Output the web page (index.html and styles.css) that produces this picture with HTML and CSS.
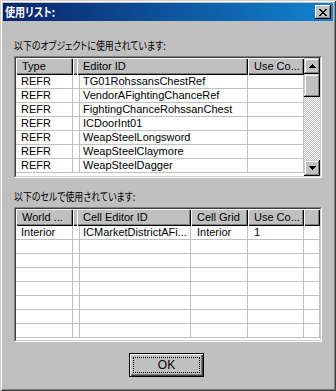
FILE: index.html
```html
<!DOCTYPE html>
<html lang="ja">
<head>
<meta charset="utf-8">
<title>使用リスト</title>
<link rel="stylesheet" href="styles.css">
</head>
<body>
<div class="window">
  <div class="titlebar">
    <span class="title">使用リスト:</span>
    <div class="close">
      <svg width="8" height="7" viewBox="0 0 8 7" shape-rendering="crispEdges">
        <rect x="0" y="0" width="2" height="1"/><rect x="6" y="0" width="2" height="1"/>
        <rect x="1" y="1" width="2" height="1"/><rect x="5" y="1" width="2" height="1"/>
        <rect x="2" y="2" width="4" height="1"/>
        <rect x="3" y="3" width="2" height="1"/>
        <rect x="2" y="4" width="4" height="1"/>
        <rect x="1" y="5" width="2" height="1"/><rect x="5" y="5" width="2" height="1"/>
        <rect x="0" y="6" width="2" height="1"/><rect x="6" y="6" width="2" height="1"/>
      </svg>
    </div>
  </div>
  <div class="client">
    <div class="label"><span class="ltext">以下のオブジェクトに使用されています:</span></div>
    <div class="listbox lb1">
      <div class="lb-inner">
        <div class="grid g1">
          <div class="hdr">
            <div class="hcell">Type</div><div class="hcell"></div><div class="hcell">Editor ID</div><div class="hcell">Use Co...</div>
          </div>
          <div class="row"><div class="cell first">REFR</div><div class="cell"></div><div class="cell">TG01RohssansChestRef</div><div class="cell"></div></div>
          <div class="row"><div class="cell first">REFR</div><div class="cell"></div><div class="cell">VendorAFightingChanceRef</div><div class="cell"></div></div>
          <div class="row"><div class="cell first">REFR</div><div class="cell"></div><div class="cell">FightingChanceRohssanChest</div><div class="cell"></div></div>
          <div class="row"><div class="cell first">REFR</div><div class="cell"></div><div class="cell">ICDoorInt01</div><div class="cell"></div></div>
          <div class="row"><div class="cell first">REFR</div><div class="cell"></div><div class="cell">WeapSteelLongsword</div><div class="cell"></div></div>
          <div class="row"><div class="cell first">REFR</div><div class="cell"></div><div class="cell">WeapSteelClaymore</div><div class="cell"></div></div>
          <div class="row"><div class="cell first">REFR</div><div class="cell"></div><div class="cell">WeapSteelDagger</div><div class="cell"></div></div>
        </div>
        <div class="vscroll">
          <div class="sbtn">
            <svg width="7" height="4" viewBox="0 0 7 4" shape-rendering="crispEdges"><path d="M3 0h1v1h1v1h1v1h1v1H0V3h1V2h1V1h1z"/></svg>
          </div>
          <div class="thumb"></div>
          <div class="track"></div>
          <div class="sbtn">
            <svg width="7" height="4" viewBox="0 0 7 4" shape-rendering="crispEdges"><path d="M0 0h7v1H6v1H5v1H4v1H3V3H2V2H1V1H0z"/></svg>
          </div>
        </div>
      </div>
    </div>
    <div class="label label2"><span class="ltext">以下のセルで使用されています:</span></div>
    <div class="listbox lb2">
      <div class="lb-inner">
        <div class="grid g2">
          <div class="hdr">
            <div class="hcell">World ...</div><div class="hcell"></div><div class="hcell">Cell Editor ID</div><div class="hcell">Cell Grid</div><div class="hcell">Use Co...</div><div class="hcell"></div>
          </div>
          <div class="row"><div class="cell first">Interior</div><div class="cell"></div><div class="cell">ICMarketDistrictAFi...</div><div class="cell">Interior</div><div class="cell">1</div><div class="cell"></div></div>
          <div class="row"><div class="cell"></div><div class="cell"></div><div class="cell"></div><div class="cell"></div><div class="cell"></div><div class="cell"></div></div>
          <div class="row"><div class="cell"></div><div class="cell"></div><div class="cell"></div><div class="cell"></div><div class="cell"></div><div class="cell"></div></div>
          <div class="row"><div class="cell"></div><div class="cell"></div><div class="cell"></div><div class="cell"></div><div class="cell"></div><div class="cell"></div></div>
          <div class="row"><div class="cell"></div><div class="cell"></div><div class="cell"></div><div class="cell"></div><div class="cell"></div><div class="cell"></div></div>
          <div class="row"><div class="cell"></div><div class="cell"></div><div class="cell"></div><div class="cell"></div><div class="cell"></div><div class="cell"></div></div>
          <div class="row"><div class="cell"></div><div class="cell"></div><div class="cell"></div><div class="cell"></div><div class="cell"></div><div class="cell"></div></div>
          <div class="row"><div class="cell"></div><div class="cell"></div><div class="cell"></div><div class="cell"></div><div class="cell"></div><div class="cell"></div></div>
        </div>
      </div>
    </div>
    <div class="buttons">
      <div class="okbtn"><div class="focus">OK</div></div>
    </div>
  </div>
</div>
</body>
</html>
```

FILE: styles.css
```css
* { box-sizing: border-box; }
html, body { margin: 0; padding: 0; }
body {
  width: 336px;
  height: 391px;
  background: #c0c0c0;
  font-family: "Liberation Sans", Arial, sans-serif;
  font-size: 11px;
  color: #000;
}
.window {
  width: 336px;
  height: 391px;
  background: #c0c0c0;
  padding: 3px;
  display: flex;
  flex-direction: column;
  box-shadow: inset 1px 1px #d4d0c8, inset -1px -1px #404040, inset 2px 2px #fff, inset -2px -2px #808080;
}
.titlebar {
  height: 18px;
  flex: none;
  background: linear-gradient(to right, #0a246a, #1084d0);
  display: flex;
  align-items: center;
  justify-content: space-between;
  padding: 0 2px;
}
.title {
  display: inline-block;
  color: #fff;
  font: bold 12px/18px "Noto Sans CJK JP", sans-serif;
  font-feature-settings: "palt";
  white-space: nowrap;
  transform: scaleX(0.84);
  transform-origin: 0 50%;
}
.close {
  width: 16px;
  height: 14px;
  background: #c0c0c0;
  display: flex;
  align-items: center;
  justify-content: center;
  padding-right: 1px;
  box-shadow: inset -1px -1px #000, inset 1px 1px #fff, inset -2px -2px #808080;
}
.close svg { fill: #000; display: block; }
.client {
  flex: 1;
  display: flex;
  flex-direction: column;
  padding: 17px 11px 0 11px;
}
.label {
  font: 11px/14px "Noto Sans CJK JP", sans-serif;
  font-feature-settings: "palt";
  height: 14px;
  margin-bottom: 4px;
  white-space: nowrap;
}
.ltext {
  display: inline-block;
  transform: scaleX(0.81);
  transform-origin: 0 50%;
}
.label2 { margin-top: 11px; }
.listbox {
  border: 1px solid;
  border-color: #808080 #fff #fff #808080;
  flex: none;
}
.lb1 { height: 122px; }
.lb2 { height: 135px; }
.lb-inner {
  height: 100%;
  border: 1px solid;
  border-color: #404040 #d4d0c8 #d4d0c8 #404040;
  background: #fff;
  display: flex;
  overflow: hidden;
}
.grid { flex: 1; overflow: hidden; }
.hdr, .row { display: grid; }
.g1 .hdr, .g1 .row { grid-template-columns: 57px 4px 171px 56px; }
.g2 .hdr, .g2 .row { grid-template-columns: 57px 4px 114px 57px 56px 16px; }
.hdr { height: 17px; }
.hcell {
  background: #c0c0c0;
  box-shadow: inset 1px 1px #fff, inset -1px -1px #000, inset -2px -2px #808080;
  padding-left: 6px;
  line-height: 17px;
  white-space: nowrap;
  overflow: hidden;
}
.row { height: 14px; }
.cell {
  border-right: 1px solid #c0c0c0;
  border-bottom: 1px solid #c0c0c0;
  padding-left: 6px;
  line-height: 13px;
  white-space: nowrap;
  overflow: hidden;
}
.cell.first { padding-left: 5px; }
.vscroll {
  width: 16px;
  flex: none;
  display: flex;
  flex-direction: column;
  background: repeating-conic-gradient(#c0c0c0 0 25%, #fff 0 50%) 0 0 / 2px 2px;
}
.sbtn, .thumb {
  background: #c0c0c0;
  box-shadow: inset -1px -1px #000, inset 1px 1px #d4d0c8, inset -2px -2px #808080, inset 2px 2px #fff;
}
.sbtn {
  height: 16px;
  flex: none;
  display: flex;
  align-items: center;
  justify-content: center;
}
.sbtn svg { fill: #000; display: block; }
.thumb { height: 23px; flex: none; }
.track { flex: 1; }
.buttons {
  display: flex;
  margin-top: 11px;
  padding-left: 115px;
}
.okbtn {
  width: 75px;
  height: 24px;
  border: 1px solid #000;
  background: #c0c0c0;
  box-shadow: inset 1px 1px #fff, inset -1px -1px #404040, inset -2px -2px #808080;
  padding: 3px;
  display: flex;
}
.focus {
  flex: 1;
  border: 1px dotted #000;
  display: flex;
  align-items: center;
  justify-content: center;
  font: 12px/1 "Liberation Sans", Arial, sans-serif;
}
```
